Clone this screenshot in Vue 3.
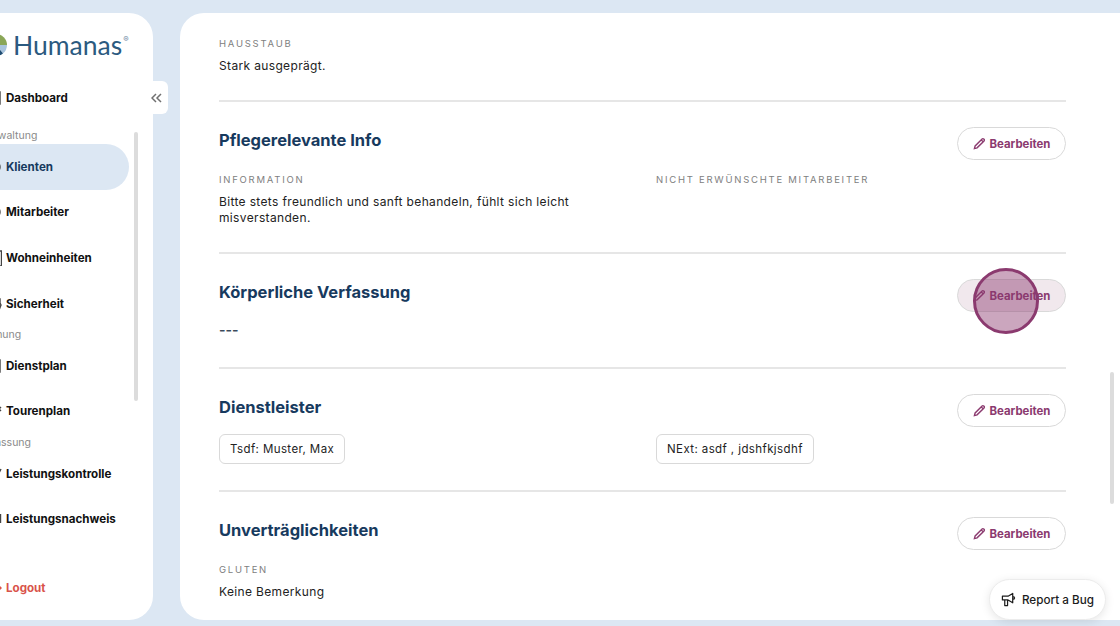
<template>
  <div class="page">
    <aside class="sidebar">
      <div class="logo">
        <svg class="logo__mark" width="24" height="24" viewBox="0 0 24 24">
          <path d="M12 12 L12 1 A11 11 0 0 1 23 12 Z" fill="#8aa657" />
          <path d="M12 12 L23 12 A11 11 0 0 1 19 20.5 Z" fill="#a9c4dd" />
          <path d="M12 12 L19 20.5 A11 11 0 0 1 12 23 Z" fill="#1f4d73" />
          <path d="M12 12 L12 23 A11 11 0 0 1 1 12 Z" fill="#5d8db5" />
          <path d="M12 12 L1 12 A11 11 0 0 1 12 1 Z" fill="#2d6a8f" />
          <circle cx="12" cy="12" r="4" fill="#fff" />
        </svg>
        <span class="logo__name">Humanas</span><sup class="logo__reg">®</sup>
      </div>

      <nav class="nav">
        <template v-for="item in navItems" :key="item.label">
          <div v-if="item.section" class="nav__section" :class="{ 'nav__section--first': item.first }">
            {{ item.label }}
          </div>
          <a v-else class="nav__item" :class="{ 'nav__item--active': item.active }">
            <svg class="nav__icon" width="16" height="16" viewBox="0 0 16 16" fill="none" stroke="currentColor" stroke-width="1.4">
              <path :d="item.icon" />
            </svg>
            <span>{{ item.label }}</span>
          </a>
        </template>
      </nav>

      <a class="nav__item nav__item--logout">
        <svg class="nav__icon" width="16" height="16" viewBox="0 0 16 16" fill="none" stroke="currentColor" stroke-width="1.4">
          <path d="M8 8h7M12.5 5.5 15 8l-2.5 2.5" />
        </svg>
        <span>Logout</span>
      </a>

      <div class="sidebar__scrollbar"></div>
    </aside>

    <button class="collapse" type="button" aria-label="Einklappen">
      <svg width="11" height="10" viewBox="0 0 11 10" fill="none" stroke="#707070" stroke-width="1.5">
        <path d="M5 1 1 5l4 4M10 1 6 5l4 4" />
      </svg>
    </button>

    <main class="content">
      <section class="block block--top">
        <div class="label">Hausstaub</div>
        <p class="text">Stark ausgeprägt.</p>
      </section>

      <section class="block block--info">
        <header class="block__head">
          <h2 class="block__title">Pflegerelevante Info</h2>
          <button class="edit" type="button">
            <svg class="edit__icon" width="13" height="13" viewBox="0 0 14 14" fill="none" stroke="currentColor" stroke-width="1.5">
              <path :d="pencil" />
            </svg>
            Bearbeiten
          </button>
        </header>
        <div class="columns">
          <div>
            <div class="label">Information</div>
            <p class="text text--wrap">Bitte stets freundlich und sanft behandeln, fühlt sich leicht misverstanden.</p>
          </div>
          <div>
            <div class="label">Nicht erwünschte Mitarbeiter</div>
          </div>
        </div>
      </section>

      <section class="block block--body">
        <header class="block__head">
          <h2 class="block__title">Körperliche Verfassung</h2>
          <button class="edit edit--pressed" type="button">
            <svg class="edit__icon" width="13" height="13" viewBox="0 0 14 14" fill="none" stroke="currentColor" stroke-width="1.5">
              <path :d="pencil" />
            </svg>
            Bearbeiten
            <span class="touch"></span>
          </button>
        </header>
        <p class="dashes">---</p>
      </section>

      <section class="block block--services">
        <header class="block__head">
          <h2 class="block__title">Dienstleister</h2>
          <button class="edit" type="button">
            <svg class="edit__icon" width="13" height="13" viewBox="0 0 14 14" fill="none" stroke="currentColor" stroke-width="1.5">
              <path :d="pencil" />
            </svg>
            Bearbeiten
          </button>
        </header>
        <div class="columns">
          <div><span class="chip">Tsdf: Muster, Max</span></div>
          <div><span class="chip">NExt: asdf , jdshfkjsdhf</span></div>
        </div>
      </section>

      <section class="block block--last">
        <header class="block__head">
          <h2 class="block__title">Unverträglichkeiten</h2>
          <button class="edit" type="button">
            <svg class="edit__icon" width="13" height="13" viewBox="0 0 14 14" fill="none" stroke="currentColor" stroke-width="1.5">
              <path :d="pencil" />
            </svg>
            Bearbeiten
          </button>
        </header>
        <div class="label">Gluten</div>
        <p class="text">Keine Bemerkung</p>
      </section>

      <div class="content__scrollbar"></div>
    </main>

    <button class="report" type="button">
      <svg width="15" height="15" viewBox="0 0 16 16" fill="none" stroke="#1c1c1c" stroke-width="1.3" stroke-linejoin="round">
        <path d="M1.5 4.5h6l5-3v10l-5-3h-6zM4 8.5v6h3v-6M12.5 5c1.4 0 2 .8 2 1.5s-.6 1.5-2 1.5" />
      </svg>
      Report a Bug
    </button>
  </div>
</template>

<script setup>
const pencil = 'M1.5 12.5 2.3 9.6 9.8 2.1a1.2 1.2 0 0 1 1.7 0l.4.4a1.2 1.2 0 0 1 0 1.7L4.4 11.7zM8.8 3.1l2.1 2.1'

const navItems = [
  { label: 'Dashboard', icon: 'M2 2h12v12H2z' },
  { label: 'Verwaltung', section: true, first: true },
  { label: 'Klienten', active: true, icon: 'M8 2a6 6 0 1 1 0 12A6 6 0 0 1 8 2z' },
  { label: 'Mitarbeiter', icon: 'M8 2a6 6 0 1 1 0 12A6 6 0 0 1 8 2z' },
  { label: 'Wohneinheiten', icon: 'M1 1h14.5v15H1z' },
  { label: 'Sicherheit', icon: 'M2 2l12 1v4l1 2-2 5' },
  { label: 'Planung', section: true },
  { label: 'Dienstplan', icon: 'M2 2h12v12H2z' },
  { label: 'Tourenplan', icon: 'M11 4l4 4m0-4l-4 4' },
  { label: 'Erfassung', section: true },
  { label: 'Leistungskontrolle', icon: 'M3 3h10v10M12 9l3-6' },
  { label: 'Leistungsnachweis', icon: 'M14.5 3v9' }
]
</script>

<style>
html,
body {
  margin: 0;
  background: #dce7f3;
}
</style>

<style scoped>
.page {
  position: relative;
  display: flex;
  width: 1120px;
  height: 626px;
  padding: 13px 0 6px;
  box-sizing: border-box;
  overflow: hidden;
  background: #dce7f3;
  font-family: "Inter", "Liberation Sans", sans-serif;
}

.sidebar {
  position: relative;
  flex: none;
  display: flex;
  flex-direction: column;
  width: 250px;
  margin-left: -97px;
  border-radius: 24px;
  background: #fff;
}

.logo {
  display: flex;
  align-items: center;
  height: 42px;
  margin-top: 11px;
  padding-left: 81px;
}

.logo__mark {
  flex: none;
}

.logo__name {
  margin-left: 5px;
  font-family: "Lato", "Liberation Sans", sans-serif;
  font-size: 26.5px;
  font-weight: 400;
  color: #2b5a80;
}

.logo__reg {
  margin: -12px 0 0 1px;
  font-size: 8px;
  color: #6d8aa3;
}

.nav {
  display: flex;
  flex-direction: column;
  width: 226px;
  margin-top: 9px;
}

.nav__section {
  height: 16.6px;
  padding-left: 78px;
  font-size: 10.5px;
  line-height: 18.6px;
  color: #8a8a8a;
}

.nav__section--first {
  padding-top: 6.8px;
}

.nav__item {
  display: flex;
  align-items: center;
  flex: none;
  gap: 4px;
  height: 45.6px;
  padding-left: 83px;
  border-radius: 0 23px 23px 0;
  font-size: 11.6px;
  font-weight: 700;
  color: #111;
}

.nav__item--active {
  background: #dce7f3;
  color: #173a5e;
}

.nav__item--logout {
  margin-top: auto;
  margin-bottom: 9px;
  color: #d9534a;
}

.nav__icon {
  flex: none;
  color: #444;
}

.nav__item--logout .nav__icon {
  color: #d9534a;
}

.sidebar__scrollbar {
  position: absolute;
  top: 119px;
  left: 231px;
  width: 4px;
  height: 269px;
  border-radius: 2px;
  background: #dcdcdc;
}

.collapse {
  position: absolute;
  top: 81px;
  left: 146px;
  display: flex;
  align-items: center;
  justify-content: center;
  width: 22px;
  height: 33px;
  padding: 0 2px 0 0;
  border: none;
  border-radius: 0 6px 6px 0;
  background: #fff;
}

.content {
  position: relative;
  flex: 1;
  margin-left: 27px;
  padding: 0 54px 0 39px;
  border-radius: 24px 0 0 24px;
  overflow: hidden;
  background: #fff;
}

.block {
  border-bottom: 2px solid #e6e6e6;
}

.block--top {
  height: 89px;
  padding-top: 24px;
  box-sizing: border-box;
}

.block--info {
  height: 152px;
  padding-top: 25px;
  box-sizing: border-box;
}

.block--body {
  height: 115px;
  padding-top: 25px;
  box-sizing: border-box;
}

.block--services {
  height: 123px;
  padding-top: 25px;
  box-sizing: border-box;
}

.block--last {
  padding-top: 25px;
  border-bottom: none;
}

.block__head {
  display: flex;
  align-items: flex-start;
  justify-content: space-between;
}

.block__title {
  margin: 0;
  font-size: 16.5px;
  font-weight: 700;
  line-height: 26px;
  color: #173a5e;
}

.columns {
  display: grid;
  grid-template-columns: 437px 1fr;
}

.block--info .columns {
  margin-top: 13px;
}

.block--services .columns {
  margin-top: 7px;
}

.block--last .label {
  margin-top: 13px;
}

.label {
  font-size: 9.5px;
  line-height: 14px;
  letter-spacing: 1.75px;
  text-transform: uppercase;
  color: #808080;
}

.text {
  margin: 7px 0 0;
  font-size: 12px;
  line-height: 16px;
  letter-spacing: 0.35px;
  color: #222;
}

.text--wrap {
  max-width: 370px;
}

.dashes {
  margin: 8px 0 0;
  font-size: 14px;
  font-weight: 600;
  line-height: 20px;
  color: #3a4a5a;
}

.chip {
  display: inline-flex;
  align-items: center;
  height: 30px;
  padding: 0 10px;
  border: 1px solid #d9d9d9;
  border-radius: 6px;
  box-sizing: border-box;
  font-size: 11.5px;
  letter-spacing: 0.4px;
  color: #222;
}

.edit {
  position: relative;
  display: inline-flex;
  align-items: center;
  flex: none;
  justify-content: center;
  gap: 4px;
  width: 109px;
  height: 33px;
  padding: 0;
  border: 1px solid #d9d9d9;
  border-radius: 17px;
  background: #fff;
  font-family: inherit;
  font-size: 11.4px;
  font-weight: 700;
  color: #8b3a6f;
}

.edit--pressed {
  background: #f1e8ed;
}

.touch {
  position: absolute;
  top: -12px;
  left: 15px;
  width: 66px;
  height: 66px;
  border: 3px solid #8b3a6f;
  border-radius: 50%;
  box-sizing: border-box;
  background: rgba(139, 58, 111, 0.45);
}

.content__scrollbar {
  position: absolute;
  top: 359px;
  right: 6px;
  width: 4px;
  height: 132px;
  border-radius: 2px;
  background: #dcdcdc;
}

.report {
  position: absolute;
  top: 579px;
  left: 989px;
  display: flex;
  align-items: center;
  justify-content: center;
  gap: 6px;
  width: 117px;
  height: 41px;
  padding: 0;
  border: 1px solid #ececec;
  border-radius: 21px;
  background: #fff;
  box-shadow: 0 2px 10px rgba(0, 0, 0, 0.1);
  font-family: inherit;
  font-size: 11.7px;
  font-weight: 500;
  color: #1c1c1c;
}
</style>
